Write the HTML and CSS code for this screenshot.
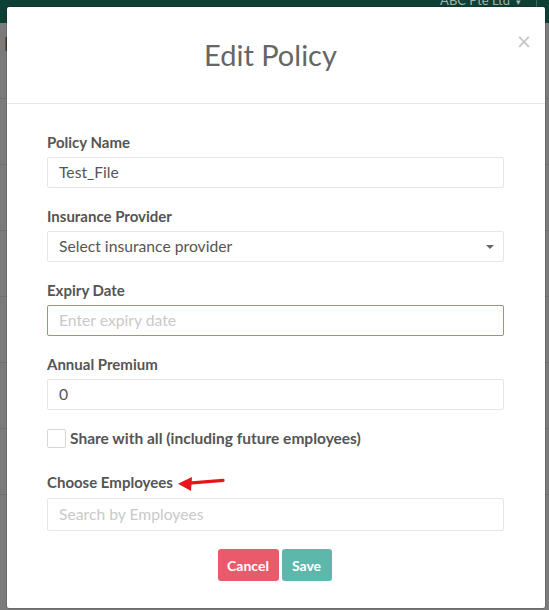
FILE: index.html
```html
<!DOCTYPE html>
<html lang="en">
<head>
<meta charset="utf-8">
<title>Edit Policy</title>
<link rel="stylesheet" href="styles.css">
</head>
<body>
<div class="page">
  <div class="topbar">
    <span class="company">ABC Pte Ltd</span>
    <span class="caret-sm">&#9662;</span>
    <span class="sep"></span>
  </div>
  <div class="page-body">
    <div class="bg-row"><span class="bg-title">E</span></div>
    <div class="bg-row"></div>
    <div class="bg-row"></div>
    <div class="bg-row"></div>
    <div class="bg-row"></div>
    <div class="bg-row"></div>
    <div class="bg-row"></div>
  </div>
</div>

<div class="modal">
  <div class="modal-header">
    <h1 class="modal-title">Edit Policy</h1>
    <button class="close" type="button">&times;</button>
  </div>
  <form class="modal-body">
    <div class="field">
      <label class="label">Policy Name</label>
      <div class="input">Test_File</div>
    </div>
    <div class="field">
      <label class="label">Insurance Provider</label>
      <div class="input select">Select insurance provider<span class="caret"></span></div>
    </div>
    <div class="field">
      <label class="label">Expiry Date</label>
      <div class="input-error">Enter expiry date</div>
    </div>
    <div class="field">
      <label class="label">Annual Premium</label>
      <div class="input">0</div>
    </div>
    <div class="check-row">
      <span class="checkbox"></span>
      <span class="check-label">Share with all (including future employees)</span>
    </div>
    <div class="field field-last">
      <label class="label label-arrow">Choose Employees
        <svg class="arrow" width="48" height="16" viewBox="0 0 48 16"><path d="M46 4.3 L12 7.2" stroke="#e8141b" stroke-width="3.2" stroke-linecap="round" fill="none"/><path d="M1 7.8 L15 1 L14 15 Z" fill="#e8141b"/></svg>
      </label>
      <div class="input tall placeholder">Search by Employees</div>
    </div>
    <div class="actions">
      <button type="button" class="btn btn-cancel">Cancel</button>
      <button type="button" class="btn btn-save">Save</button>
    </div>
  </form>
</div>
</body>
</html>
```

FILE: styles.css
```css
* { box-sizing: border-box; }
html, body { margin: 0; padding: 0; }
body {
  width: 549px;
  height: 610px;
  overflow: hidden;
  font-family: Lato, "Noto Sans", sans-serif;
  background: #7b7b7b;
}
.page { position: relative; height: 610px; }
.topbar {
  height: 23px;
  background: #0d3f35;
  display: flex;
  justify-content: flex-end;
  align-items: flex-start;
  padding-right: 12px;
}
.company {
  color: #9fb5ae;
  font-size: 13px;
  line-height: 14px;
  margin-top: -7px;
}
.caret-sm {
  color: #9fb5ae;
  font-size: 9px;
  line-height: 9px;
  margin-top: -3px;
  margin-left: 6px;
  margin-right: 15px;
}
.sep { width: 1px; height: 23px; background: #3f6a60; }
.page-body { padding-top: 10px; }
.bg-row { height: 66px; border-bottom: 1px solid #707070; padding: 0 4px; }
.bg-title { display: inline-block; color: #3a3a3a; font-weight: 700; font-size: 18px; }

.modal {
  position: absolute;
  top: 7px;
  left: 7px;
  width: 538px;
  height: 601px;
  background: #fff;
  box-shadow: 0 0 0 1px rgba(0, 0, 0, 0.12);
  border-radius: 2px;
  color: #555;
}
.modal-header {
  position: relative;
  height: 97px;
  border-bottom: 1px solid #e5e5e5;
  display: flex;
  align-items: center;
  justify-content: center;
  padding-right: 11px;
}
.modal-title {
  margin: 0;
  font-size: 29px;
  font-weight: 400;
  color: #666;
  padding-bottom: 2px;
}
.close {
  position: absolute;
  top: 26px;
  right: 13px;
  border: none;
  background: none;
  padding: 0;
  font-size: 19px;
  line-height: 16px;
  color: #c4c4c4;
  font-family: "DejaVu Sans", sans-serif;
}
.modal-body {
  padding: 29px 41px 0 40px;
  margin: 0;
}
.field { margin-bottom: 19px; }
.label {
  display: block;
  font-size: 15px;
  font-weight: 700;
  line-height: 18px;
  margin-bottom: 6px;
  color: #555;
}
.label-arrow { display: flex; align-items: center; }
.arrow { margin-left: 4px; margin-top: 4px; }
.input, .input-error {
  height: 31px;
  border: 1px solid #e6e6e6;
  border-radius: 2px;
  padding: 0 11px;
  font-size: 15.7px;
  line-height: 29px;
  color: #555;
  position: relative;
}
.input-error {
  border-color: #e0737e;
  color: #c9c9c9;
}
.input.tall { height: 33px; line-height: 31px; }
.placeholder { color: #c9c9c9; }
.caret {
  position: absolute;
  right: 9px;
  top: 13px;
  width: 0; height: 0;
  border-left: 4px solid transparent;
  border-right: 4px solid transparent;
  border-top: 4px solid #666;
}
.check-row {
  display: flex;
  align-items: center;
  gap: 4px;
  margin-top: 19px;
  margin-bottom: 24px;
}
.checkbox {
  width: 19px;
  height: 19px;
  border: 1px solid #d6d6d6;
  border-radius: 2px;
  background: #fff;
}
.check-label { font-size: 15.5px; font-weight: 700; color: #555; line-height: 18px; margin-top: -2px; }
.field-last { margin-bottom: 18px; }
.actions { display: flex; justify-content: center; gap: 3px; padding-right: 2px; }
.btn {
  height: 32px;
  border: none;
  border-radius: 3px;
  color: #fff;
  font-family: inherit;
  font-weight: 700;
  font-size: 14px;
  padding: 0;
}
.btn-cancel { width: 61px; background: #e95b6b; }
.btn-save { width: 50px; background: #5db7ab; }
```
